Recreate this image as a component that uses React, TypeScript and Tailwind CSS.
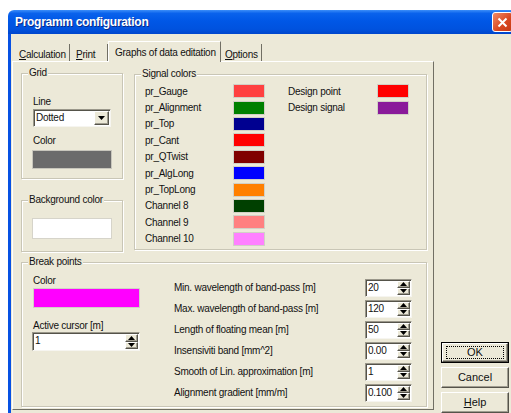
import React from "react";

type Swatch = { name: string; color: string };

const signals: Swatch[] = [
  { name: "pr_Gauge", color: "#FF4040" },
  { name: "pr_Alignment", color: "#008000" },
  { name: "pr_Top", color: "#000090" },
  { name: "pr_Cant", color: "#FF0000" },
  { name: "pr_QTwist", color: "#800000" },
  { name: "pr_AlgLong", color: "#0000FF" },
  { name: "pr_TopLong", color: "#FF8000" },
  { name: "Channel 8", color: "#004000" },
  { name: "Channel 9", color: "#FF8080" },
  { name: "Channel 10", color: "#FF80FF" },
];

const design: Swatch[] = [
  { name: "Design point", color: "#FF0000" },
  { name: "Design signal", color: "#8A1A9A" },
];

const breakParams = [
  { label: "Min. wavelength of band-pass [m]", value: "20" },
  { label: "Max. wavelength of band-pass [m]", value: "120" },
  { label: "Length of floating mean [m]", value: "50" },
  { label: "Insensiviti band [mm^2]", value: "0.00" },
  { label: "Smooth of Lin. approximation [m]", value: "1" },
  { label: "Alignment gradient [mm/m]", value: "0.100" },
];

const sunken =
  "border border-t-[#9a978a] border-l-[#9a978a] border-r-[#f6f5f0] border-b-[#f6f5f0] shadow-[inset_1px_1px_0_#55534a]";

const raised =
  "border border-t-white border-l-white border-r-[#55534a] border-b-[#55534a] shadow-[inset_-1px_-1px_0_#a09d90]";

function Group({
  title,
  className,
  children,
}: {
  title: string;
  className: string;
  children?: React.ReactNode;
}) {
  return (
    <div
      className={`relative border border-[#c9c6b6] shadow-[inset_1px_1px_0_#fff,1px_1px_0_#fff] ${className}`}
    >
      <span className="absolute -top-[7px] left-[6px] bg-[#ECE9D8] px-[1px] leading-[12px]">
        {title}
      </span>
      {children}
    </div>
  );
}

function Arrow({ up }: { up?: boolean }) {
  return (
    <svg width="7" height="4" viewBox="0 0 7 4">
      <path d={up ? "M3.5 0L7 4H0z" : "M0 0h7L3.5 4z"} fill="#000" />
    </svg>
  );
}

function SpinButtons() {
  return (
    <div className="flex w-[13px] flex-col">
      <div className={`flex flex-1 items-center justify-center bg-[#ECE9D8] ${raised}`}>
        <Arrow up />
      </div>
      <div className={`flex flex-1 items-center justify-center bg-[#ECE9D8] ${raised}`}>
        <Arrow />
      </div>
    </div>
  );
}

function Spin({ value, className }: { value: string; className: string }) {
  return (
    <div className={`flex bg-white p-[1px] ${sunken} ${className}`}>
      <span className="flex-1 pl-[1px] leading-[14px]">{value}</span>
      <SpinButtons />
    </div>
  );
}

function Button({
  label,
  accel,
  focused,
}: {
  label: string;
  accel?: number;
  focused?: boolean;
}) {
  const text =
    accel === undefined ? (
      label
    ) : (
      <>
        {label.slice(0, accel)}
        <span className="underline">{label[accel]}</span>
        {label.slice(accel + 1)}
      </>
    );
  return (
    <div className={focused ? "border border-black" : ""}>
      <div
        className={`flex items-center justify-center bg-[#ECE9D8] ${raised} ${
          focused ? "h-[19px]" : "h-[21px]"
        }`}
      >
        <span
          className={
            focused
              ? "flex h-[13px] w-[58px] items-center justify-center border border-dotted border-black"
              : ""
          }
        >
          {text}
        </span>
      </div>
    </div>
  );
}

function Tab({
  label,
  accel,
  active,
  className,
}: {
  label: string;
  accel?: number;
  active?: boolean;
  className: string;
}) {
  return (
    <div
      className={`${
        active
          ? "relative z-10 -mb-[1px] h-[21px] border border-b-0 border-t-white border-l-white border-r-[#716F64] bg-[#ECE9D8]"
          : "mt-[3px] h-[17px] border-r border-r-[#716F64]"
      } flex items-start pt-[3px] ${className}`}
    >
      {accel === undefined ? (
        label
      ) : (
        <>
          <span className="underline">{label[accel]}</span>
          {label.slice(accel + 1)}
        </>
      )}
    </div>
  );
}

export default function App() {
  return (
    <div className="h-[413px] w-[511px] overflow-hidden bg-white font-['Liberation_Sans',Arial,sans-serif] text-[10px] tracking-[-0.25px] text-[#111]">
      <div className="ml-[8px] mt-[10px] flex h-[403px] w-[503px] flex-col">
        {/* title bar */}
        <div className="flex h-[25px] items-center rounded-tl-[6px] bg-[linear-gradient(to_bottom,#3C8EF8_0%,#0A62EC_14%,#0057E6_45%,#0052DE_80%,#0046CC_100%)] pl-[7px]">
          <span className="text-[12px] font-bold tracking-[-0.3px] text-white [text-shadow:1px_1px_0_#0A2A88]">
            Programm configuration
          </span>
          <div className="ml-auto mr-[-2px] flex h-[20px] w-[21px] items-center justify-center rounded-[3px] border border-white bg-[linear-gradient(135deg,#F08A68,#D8461F_60%,#C43A16)]">
            <svg width="11" height="11" viewBox="0 0 11 11">
              <path d="M1.5 1.5l8 8M9.5 1.5l-8 8" stroke="#fff" strokeWidth="2" />
            </svg>
          </div>
        </div>

        {/* dialog body */}
        <div className="flex flex-1 border-l-[3px] border-l-[#0751E3] bg-[#ECE9D8]">
          <div className="ml-[1px] flex w-[422px] flex-col">
            {/* tabs */}
            <div className="flex h-[27px] items-end pl-[2px]">
              <Tab label="Calculation" accel={0} className="w-[56px] pl-[5px]" />
              <Tab label="Print" accel={0} className="w-[38px] pl-[6px]" />
              <Tab label="Graphs of data editation" active className="w-[113px] pl-[6px]" />
              <Tab label="Options" accel={0} className="w-[41px] pl-[4px]" />
            </div>

            {/* tab page */}
            <div className="flex h-[349px] flex-col border border-t-white border-l-white border-r-[#716F64] border-b-[#716F64] pl-[8px] pt-[11px]">
              <div className="flex">
                <div className="flex w-[102px] flex-col">
                  <Group title="Grid" className="h-[106px] pl-[11px] pt-[22px]">
                    <div className="leading-[12px]">Line</div>
                    <div className={`mt-[1px] flex h-[18px] w-[78px] bg-white p-[1px] ${sunken}`}>
                      <span className="flex-1 pl-[1px] leading-[14px]">Dotted</span>
                      <div className={`flex w-[15px] items-center justify-center bg-[#ECE9D8] ${raised}`}>
                        <Arrow />
                      </div>
                    </div>
                    <div className="mt-[8px] leading-[12px]">Color</div>
                    <div className="-ml-[1px] mt-[3px] h-[19px] w-[80px] border border-[#c8c6bc] bg-[#6B6B6B]" />
                  </Group>
                  <Group title="Background color" className="mt-[21px] h-[52px] pl-[10px] pt-[17px]">
                    <div className="h-[21px] w-[80px] border border-[#d6d4ca] bg-white" />
                  </Group>
                </div>

                <Group title="Signal colors" className="ml-[11px] mt-[1px] flex h-[176px] w-[293px] pl-[10px] pt-[8px]">
                  <div className="flex flex-col">
                    {signals.map((s) => (
                      <div key={s.name} className="flex h-[16.4px] items-center">
                        <span className="w-[88px]">{s.name}</span>
                        <div
                          className="h-[14px] w-[32px] border border-[#d2d0c6]"
                          style={{ background: s.color }}
                        />
                      </div>
                    ))}
                  </div>
                  <div className="ml-[23px] flex flex-col">
                    {design.map((s) => (
                      <div key={s.name} className="flex h-[16.4px] items-center">
                        <span className="w-[89px]">{s.name}</span>
                        <div
                          className="h-[14px] w-[32px] border border-[#d2d0c6]"
                          style={{ background: s.color }}
                        />
                      </div>
                    ))}
                  </div>
                </Group>
              </div>

              <Group title="Break points" className="mt-[10px] flex h-[145px] w-[406px] pl-[11px] pt-[12px]">
                <div className="flex w-[108px] flex-col">
                  <div className="leading-[12px]">Color</div>
                  <div className="mt-[1px] h-[20px] w-[107px] border border-[#d2d0c6] bg-[#FF00FF]" />
                  <div className="mt-[12px] leading-[12px]">Active cursor [m]</div>
                  <Spin value="1" className="-ml-[1px] h-[19px] w-[108px]" />
                </div>
                <div className="ml-[33px] mt-[2px] flex flex-col">
                  {breakParams.map((p) => (
                    <div key={p.label} className="flex h-[21px] items-center">
                      <span className="w-[191px]">{p.label}</span>
                      <Spin value={p.value} className="h-[18px] w-[47px]" />
                    </div>
                  ))}
                </div>
              </Group>
            </div>
          </div>

          {/* dialog buttons */}
          <div className="ml-[7px] flex w-[68px] flex-col gap-[4px] pt-[308px] text-[11px] tracking-normal">
            <Button label="OK" focused />
            <Button label="Cancel" />
            <Button label="Help" accel={0} />
          </div>
        </div>
      </div>
    </div>
  );
}
